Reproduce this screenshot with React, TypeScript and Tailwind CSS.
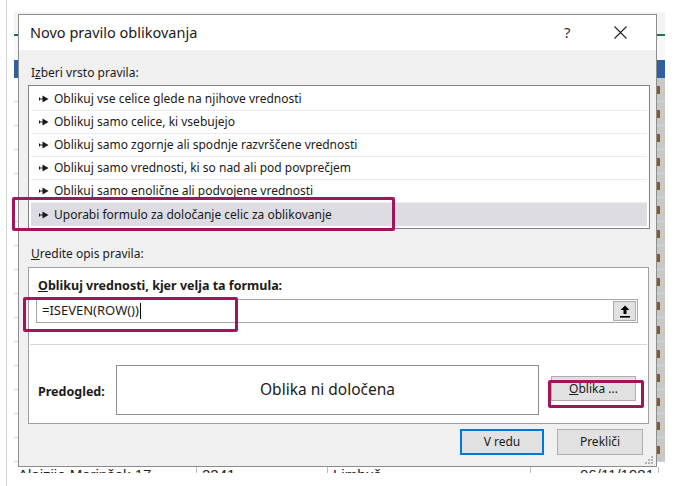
const rules = [
  "Oblikuj vse celice glede na njihove vrednosti",
  "Oblikuj samo celice, ki vsebujejo",
  "Oblikuj samo zgornje ali spodnje razvrščene vrednosti",
  "Oblikuj samo vrednosti, ki so nad ali pod povprečjem",
  "Oblikuj samo enolične ali podvojene vrednosti",
  "Uporabi formulo za določanje celic za oblikovanje",
];

function RuleArrow() {
  return (
    <svg width="10" height="8" viewBox="0 0 10 8" className="shrink-0">
      <rect x="0" y="2.5" width="1" height="3" fill="#1a1a1a" />
      <rect x="0" y="3.5" width="4" height="1" fill="#1a1a1a" />
      <path d="M3.5 0.5 L9.5 4 L3.5 7.5 Z" fill="#1a1a1a" />
    </svg>
  );
}

function CollapseIcon() {
  return (
    <svg width="10" height="13" viewBox="0 0 10 13">
      <path d="M5 0.5 L9.5 5 L6.5 5 L6.5 9 L3.5 9 L3.5 5 L0.5 5 Z" fill="#000" />
      <rect x="0" y="11" width="10" height="1.6" fill="#000" />
    </svg>
  );
}

function SheetRow() {
  return (
    <div className="flex h-[24px] shrink-0 border-b border-[#d4d4d4]">
      <div className="w-[6px] border-r border-[#d4d4d4]" />
      <div className="flex-1" />
      <div className="flex w-[8px] items-center bg-[#c8c8c8]">
        <div className="h-[8px] w-[3px] bg-[#8a5a1e]" />
      </div>
    </div>
  );
}

export default function App() {
  return (
    <div
      className="relative h-[486px] w-[680px] overflow-hidden bg-white"
      style={{ fontFamily: '"Noto Sans", "Open Sans", sans-serif' }}
    >
      {/* Excel sheet behind the dialog */}
      <div className="flex h-full">
        <div className="w-[6px]" />
        <div className="border-l border-[#d6d6d6] pl-[7px] pt-[12px]">
          <div className="flex h-[461px] w-[651px] flex-col overflow-hidden bg-white">
            <div className="h-[22px] shrink-0 bg-[#f3f3f3]" />
            <div className="h-[2px] shrink-0 bg-[#217346]" />
            <div className="h-[24px] shrink-0 bg-[#f7f7f7]" />
            <div className="h-[18px] shrink-0 bg-[#2f5f9e]" />
            {Array.from({ length: 16 }).map((_, i) => (
              <SheetRow key={i} />
            ))}
            <div
              className="flex h-[24px] shrink-0 pt-[5px] text-[15px] leading-[16px] text-[#222]"
              style={{ fontFamily: '"Liberation Sans", Arial, sans-serif' }}
            >
              <div className="w-[183px] border-r border-[#bbb] pl-[4px]">Alojzije Marinšek 17</div>
              <div className="w-[131px] border-r border-[#bbb] pl-[5px]">2241</div>
              <div className="w-[203px] border-r border-[#bbb] pl-[5px]">Limbuš</div>
              <div className="w-[128px] border-r border-[#bbb] pr-[4px] text-right">06/11/1981</div>
            </div>
          </div>
        </div>
      </div>

      {/* Dialog */}
      <div className="absolute left-[18px] top-[14px] flex h-[453px] w-[639px] flex-col border border-[#8c8c8c] bg-[#f0f0f0] text-[12px] text-[#1a1a1a]">
        <div className="flex h-[35px] shrink-0 items-center bg-white pl-[11px]">
          <span className="flex-1 text-[14.5px] text-[#1a1a1a]">Novo pravilo oblikovanja</span>
          <span className="w-[20px] text-[15px] text-[#333]">?</span>
          <div className="flex w-[72px] justify-center">
            <svg width="13" height="13" viewBox="0 0 13 13">
              <path d="M0.5 0.5 L12.5 12.5 M12.5 0.5 L0.5 12.5" stroke="#222" strokeWidth="1.1" />
            </svg>
          </div>
        </div>

        <div className="flex flex-1 flex-col px-[9px]">
          <div className="mt-[15px] h-[16px] pl-[3px] leading-[16px]">
            I<span className="underline">z</span>beri vrsto pravila:
          </div>

          <div className="mt-[4px] h-[144px] w-[622px] border border-[#828282] bg-white p-[2px]">
            {rules.map((r, i) => (
              <div
                key={r}
                className={
                  i === rules.length - 1
                    ? "flex h-[23px] items-center gap-[5px] bg-[#dcdce2] pl-[8px]"
                    : "flex h-[23px] items-center gap-[5px] border-b border-[#ececec] pl-[8px]"
                }
              >
                <RuleArrow />
                <span>{r}</span>
              </div>
            ))}
          </div>

          <div className="mt-[17px] h-[16px] pl-[3px] leading-[16px]">
            <span className="underline">U</span>redite opis pravila:
          </div>

          <div className="mt-[5px] flex h-[157px] w-[621px] flex-col border border-[#a0a0a0] bg-white">
            <div className="ml-[9px] mt-[10px] h-[16px] text-[12.5px] font-bold leading-[16px]">
              <span className="underline">O</span>blikuj vrednosti, kjer velja ta formula:
            </div>
            <div className="ml-[7px] mt-[5px] flex h-[24px] w-[602px] border border-[#a6a6a6]">
              <div className="flex flex-1 items-center pl-[5px] text-[13px]">
                <span>=ISEVEN(ROW())</span>
                <span className="ml-[1px] h-[16px] w-px bg-black" />
              </div>
              <div className="m-px flex w-[23px] items-center justify-center border border-[#adadad] bg-[#e1e1e1]">
                <CollapseIcon />
              </div>
            </div>
            <div className="mx-px mt-[21px] h-px bg-[#d5d5d5]" />
            <div className="flex flex-1 items-start">
              <div className="ml-[9px] mt-[38px] w-[78px] text-[12.5px] font-bold">Predogled:</div>
              <div className="mt-[20px] flex h-[50px] w-[423px] items-center justify-center border border-[#8f8f8f] text-[15.5px]">
                Oblika ni določena
              </div>
              <div className="ml-[12px] mt-[31px] flex h-[25px] w-[85px] items-center justify-center border border-[#adadad] bg-[#e1e1e1]">
                <span className="underline">O</span>blika ...
              </div>
            </div>
          </div>

          <div className="mt-[5px] flex justify-end gap-[13px] pr-[4px]">
            <button className="flex h-[26px] w-[84px] items-center justify-center border-2 border-[#0078d7] bg-[#e1e1e1]">
              V redu
            </button>
            <button className="flex h-[26px] w-[86px] items-center justify-center border border-[#adadad] bg-[#e1e1e1]">
              Prekliči
            </button>
          </div>
        </div>

        <svg width="8" height="8" viewBox="0 0 8 8" className="absolute bottom-[2px] right-[3px]">
          <rect x="6" y="0" width="2" height="2" fill="#b5b5b5" />
          <rect x="3" y="3" width="2" height="2" fill="#b5b5b5" />
          <rect x="6" y="3" width="2" height="2" fill="#b5b5b5" />
          <rect x="0" y="6" width="2" height="2" fill="#b5b5b5" />
          <rect x="3" y="6" width="2" height="2" fill="#b5b5b5" />
          <rect x="6" y="6" width="2" height="2" fill="#b5b5b5" />
        </svg>
      </div>

      {/* Highlight frames */}
      <div className="absolute left-[12px] top-[197px] h-[34px] w-[383px] rounded-[2px] border-[3px] border-[#a2145b]" />
      <div className="absolute left-[23px] top-[297px] h-[35px] w-[215px] rounded-[2px] border-[3px] border-[#a2145b]" />
      <div className="absolute left-[548px] top-[380px] h-[28px] w-[96px] rounded-[2px] border-[3px] border-[#a2145b]" />
    </div>
  );
}
